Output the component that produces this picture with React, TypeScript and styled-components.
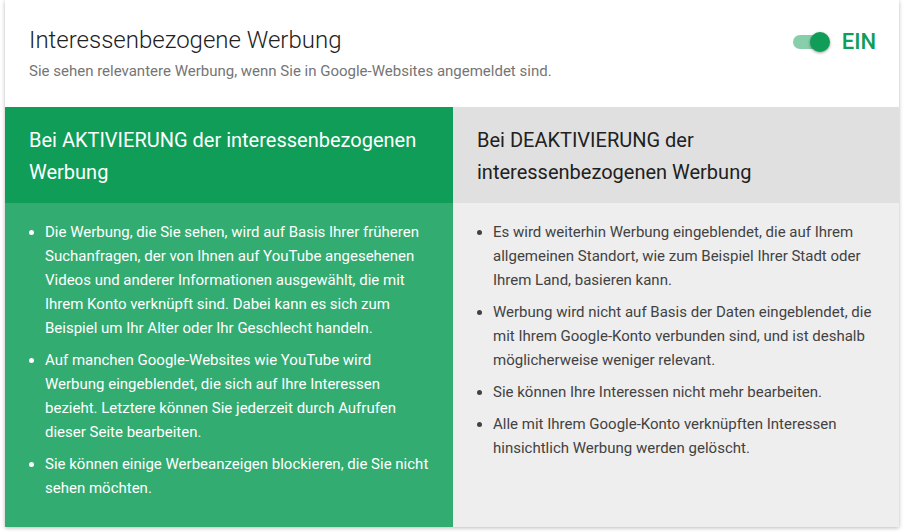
import React from "react";
import styled, { createGlobalStyle } from "styled-components";

const Global = createGlobalStyle`
  html, body { margin: 0; padding: 0; background: #ffffff; }
  body { font-family: Roboto, "Noto Sans", Arial, sans-serif; -webkit-font-smoothing: antialiased; }
  * { box-sizing: border-box; }
`;

const Page = styled.div`
  padding: 0 5px 5px 5px;
  width: 904px;
`;

const Card = styled.div`
  width: 894px;
  height: 527px;
  background: #ffffff;
  box-shadow: 0 1px 4px rgba(0, 0, 0, 0.28);
  display: flex;
  flex-direction: column;
`;

const Header = styled.div`
  display: flex;
  justify-content: space-between;
  align-items: flex-start;
  padding: 24px 24px 0 24px;
  height: 107px;
`;

const Titles = styled.div`
  display: flex;
  flex-direction: column;
`;

const Title = styled.h1`
  margin: 0;
  font-size: 24px;
  line-height: 32px;
  font-weight: 300;
  color: #212121;
`;

const Subtitle = styled.p`
  margin: 5px 0 0 0;
  font-size: 15px;
  line-height: 20px;
  color: #757575;
`;

const ToggleWrap = styled.div`
  display: flex;
  align-items: center;
  gap: 15px;
  margin-top: 6px;
  margin-right: -1px;
`;

const Track = styled.div`
  position: relative;
  width: 34px;
  height: 14px;
  border-radius: 7px;
  background: #87cfab;
`;

const Thumb = styled.div`
  position: absolute;
  top: -3px;
  right: -3px;
  width: 20px;
  height: 20px;
  border-radius: 50%;
  background: #0f9d58;
  box-shadow: 0 1px 3px rgba(0, 0, 0, 0.4);
`;

const ToggleLabel = styled.span`
  font-size: 22px;
  line-height: 24px;
  font-weight: 500;
  color: #0f9d58;
`;

const Columns = styled.div`
  flex: 1;
  display: grid;
  grid-template-columns: 448px 446px;
`;

const Column = styled.div<{ $on?: boolean }>`
  display: flex;
  flex-direction: column;
  background: ${(p) => (p.$on ? "#33ac71" : "#eeeeee")};
  color: ${(p) => (p.$on ? "#ffffff" : "#424242")};
`;

const ColHead = styled.div<{ $on?: boolean }>`
  height: 96px;
  padding: 17px 24px 0 24px;
  font-size: 20px;
  line-height: 32px;
  font-weight: 400;
  background: ${(p) => (p.$on ? "#0f9d58" : "#e0e0e0")};
  color: ${(p) => (p.$on ? "#ffffff" : "#212121")};
`;

const List = styled.ul`
  margin: 0;
  padding: 17px 24px 0 40px;
  font-size: 15px;
  line-height: 24px;
`;

const Item = styled.li`
  margin-bottom: 8px;
`;

const onItems = [
  "Die Werbung, die Sie sehen, wird auf Basis Ihrer früheren Suchanfragen, der von Ihnen auf YouTube angesehenen Videos und anderer Informationen ausgewählt, die mit Ihrem Konto verknüpft sind. Dabei kann es sich zum Beispiel um Ihr Alter oder Ihr Geschlecht handeln.",
  "Auf manchen Google-Websites wie YouTube wird Werbung eingeblendet, die sich auf Ihre Interessen bezieht. Letztere können Sie jederzeit durch Aufrufen dieser Seite bearbeiten.",
  "Sie können einige Werbeanzeigen blockieren, die Sie nicht sehen möchten.",
];

const offItems = [
  "Es wird weiterhin Werbung eingeblendet, die auf Ihrem allgemeinen Standort, wie zum Beispiel Ihrer Stadt oder Ihrem Land, basieren kann.",
  "Werbung wird nicht auf Basis der Daten eingeblendet, die mit Ihrem Google-Konto verbunden sind, und ist deshalb möglicherweise weniger relevant.",
  "Sie können Ihre Interessen nicht mehr bearbeiten.",
  "Alle mit Ihrem Google-Konto verknüpften Interessen hinsichtlich Werbung werden gelöscht.",
];

export default function App() {
  return (
    <>
      <Global />
      <Page>
        <Card>
          <Header>
            <Titles>
              <Title>Interessenbezogene Werbung</Title>
              <Subtitle>Sie sehen relevantere Werbung, wenn Sie in Google-Websites angemeldet sind.</Subtitle>
            </Titles>
            <ToggleWrap>
              <Track>
                <Thumb />
              </Track>
              <ToggleLabel>EIN</ToggleLabel>
            </ToggleWrap>
          </Header>
          <Columns>
            <Column $on>
              <ColHead $on>Bei AKTIVIERUNG der interessenbezogenen Werbung</ColHead>
              <List>
                {onItems.map((t) => (
                  <Item key={t}>{t}</Item>
                ))}
              </List>
            </Column>
            <Column>
              <ColHead>Bei DEAKTIVIERUNG der interessenbezogenen Werbung</ColHead>
              <List>
                {offItems.map((t) => (
                  <Item key={t}>{t}</Item>
                ))}
              </List>
            </Column>
          </Columns>
        </Card>
      </Page>
    </>
  );
}
